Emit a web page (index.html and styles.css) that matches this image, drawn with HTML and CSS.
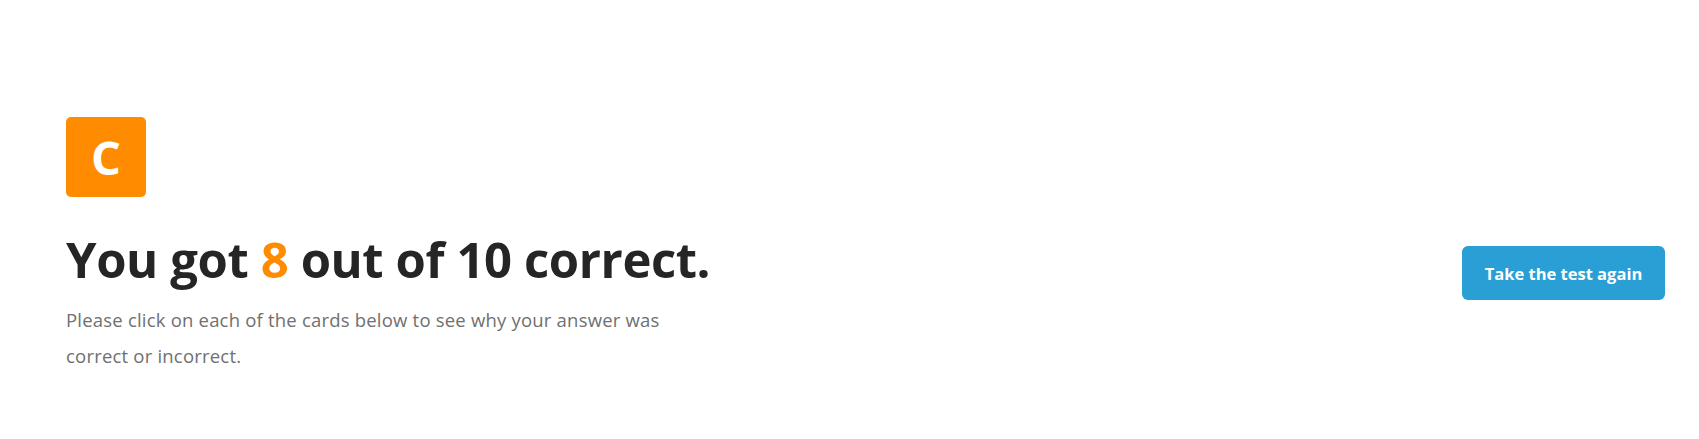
FILE: index.html
```html
<!DOCTYPE html>
<html lang="en">
<head>
<meta charset="utf-8">
<title>Results</title>
<link rel="stylesheet" href="styles.css">
</head>
<body>
<main class="results">
  <div class="grade">C</div>
  <div class="summary">
    <div class="summary-text">
      <h1 class="score">You got <span class="score-num">8</span> out of 10 correct.</h1>
      <p class="hint">Please click on each of the cards below to see why your answer was correct or incorrect.</p>
    </div>
    <button class="retake" type="button">Take the test again</button>
  </div>
</main>
</body>
</html>
```
FILE: styles.css
```css
html, body {
  margin: 0;
  padding: 0;
  background: #ffffff;
}
body {
  font-family: "Open Sans", "Noto Sans", sans-serif;
  color: #252525;
}
.results {
  padding: 117px 34px 0 66px;
}
.grade {
  width: 80px;
  height: 80px;
  border-radius: 5px;
  background: #ff8c00;
  color: #ffffff;
  font-weight: 700;
  font-size: 47px;
  line-height: 80px;
  text-align: center;
}
.summary {
  display: flex;
  justify-content: space-between;
  align-items: flex-start;
  margin-top: 30px;
}
.summary-text {
  flex: 1 1 auto;
}
.score {
  margin: 2px 0 0;
  font-size: 49px;
  line-height: 60px;
  font-weight: 700;
  letter-spacing: -0.4px;
  white-space: nowrap;
  color: #252525;
}
.score-num {
  color: #ff8c00;
}
.hint {
  max-width: 620px;
  margin: 13px 0 0;
  font-size: 18.5px;
  line-height: 36px;
  letter-spacing: 0.2px;
  color: #707070;
}
.retake {
  flex: 0 0 auto;
  margin-top: 19px;
  width: 203px;
  height: 54px;
  border: none;
  border-radius: 6px;
  background: #2a9fd6;
  color: #ffffff;
  font-family: inherit;
  font-size: 16.5px;
  font-weight: 700;
  cursor: pointer;
}
```
